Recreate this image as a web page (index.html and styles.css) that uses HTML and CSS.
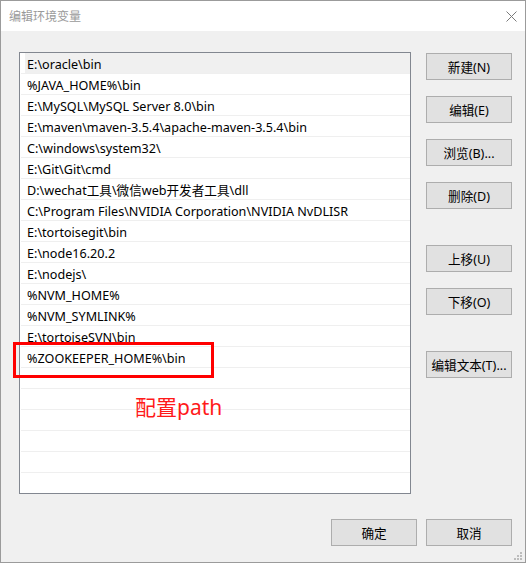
FILE: index.html
```html
<!DOCTYPE html>
<html lang="zh-CN">
<head>
<meta charset="utf-8">
<title>编辑环境变量</title>
<link rel="stylesheet" href="styles.css">
</head>
<body>
<div class="window">
  <div class="titlebar">
    <span class="title">编辑环境变量</span>
    <svg class="close" width="11" height="11" viewBox="0 0 11 11"><path d="M0.5 0.5 L10.5 10.5 M10.5 0.5 L0.5 10.5" stroke="#7a7a7a" stroke-width="1" fill="none"/></svg>
  </div>
  <div class="content">
    <div class="main">
      <div class="list">
        <div class="row selected">E:\oracle\bin</div>
        <div class="row">%JAVA_HOME%\bin</div>
        <div class="row">E:\MySQL\MySQL Server 8.0\bin</div>
        <div class="row">E:\maven\maven-3.5.4\apache-maven-3.5.4\bin</div>
        <div class="row">C:\windows\system32\</div>
        <div class="row">E:\Git\Git\cmd</div>
        <div class="row">D:\wechat工具\微信web开发者工具\dll</div>
        <div class="row">C:\Program Files\NVIDIA Corporation\NVIDIA NvDLISR</div>
        <div class="row">E:\tortoisegit\bin</div>
        <div class="row">E:\node16.20.2</div>
        <div class="row">E:\nodejs\</div>
        <div class="row">%NVM_HOME%</div>
        <div class="row">%NVM_SYMLINK%</div>
        <div class="row">E:\tortoiseSVN\bin</div>
        <div class="row">%ZOOKEEPER_HOME%\bin</div>
        <div class="row"></div>
        <div class="row"></div>
        <div class="row"></div>
        <div class="row"></div>
        <div class="row"></div>
        <div class="row"></div>
      </div>
      <div class="side">
        <button class="btn">新建(N)</button>
        <button class="btn gap-s">编辑(E)</button>
        <button class="btn gap-s">浏览(B)...</button>
        <button class="btn gap-s">删除(D)</button>
        <button class="btn gap-l">上移(U)</button>
        <button class="btn gap-s">下移(O)</button>
        <button class="btn gap-l">编辑文本(T)...</button>
      </div>
    </div>
    <div class="footer">
      <button class="btn">确定</button>
      <button class="btn">取消</button>
    </div>
    <svg class="grip" width="9" height="9" viewBox="0 0 9 9">
      <rect x="6" y="0" width="2" height="2" fill="#bcbcbc"/>
      <rect x="3" y="3" width="2" height="2" fill="#bcbcbc"/>
      <rect x="6" y="3" width="2" height="2" fill="#bcbcbc"/>
      <rect x="0" y="6" width="2" height="2" fill="#bcbcbc"/>
      <rect x="3" y="6" width="2" height="2" fill="#bcbcbc"/>
      <rect x="6" y="6" width="2" height="2" fill="#bcbcbc"/>
    </svg>
  </div>
  <div class="mark-box"></div>
  <div class="mark-text">配置path</div>
</div>
</body>
</html>
```
FILE: styles.css
```css
* {
  box-sizing: border-box;
}

body {
  margin: 0;
  background: #ffffff;
  font-family: "Noto Sans", "Noto Sans CJK SC", sans-serif;
  font-size: 12.6px;
  color: #000;
}

.window {
  position: relative;
  width: 526px;
  height: 563px;
  border: 1px solid #9b9b9b;
  background: #f0f0f0;
  display: flex;
  flex-direction: column;
}

.titlebar {
  height: 30px;
  background: #ffffff;
  display: flex;
  align-items: center;
  justify-content: space-between;
  padding: 0 8px 0 8px;
}

.title {
  color: #9a9a9a;
  font-family: "Noto Sans CJK SC", sans-serif;
  font-size: 12px;
  line-height: 1;
}

.close {
  display: block;
}

.content {
  position: relative;
  flex: 1;
  padding: 21px 13px 0 18px;
}

.main {
  display: flex;
  gap: 15px;
}

.list {
  width: 392px;
  height: 442px;
  border: 1px solid #828790;
  background: #ffffff;
  padding-left: 1px;
  overflow: hidden;
}

.row {
  height: 21px;
  padding-top: 2px;
  line-height: 19px;
  border-bottom: 1px solid #efefef;
  padding-left: 6px;
  white-space: nowrap;
  overflow: visible;
}

.row.selected {
  background: linear-gradient(to right, transparent 4px, #f0f0f0 4px);
}

.side {
  display: flex;
  flex-direction: column;
  padding-top: 1px;
}

.btn {
  width: 86px;
  height: 27px;
  border: 1px solid #adadad;
  background: #e1e1e1;
  font-family: "Noto Sans", "Noto Sans CJK SC", sans-serif;
  font-size: 12.6px;
  color: #000;
  padding: 0;
  margin: 0;
}

.gap-s {
  margin-top: 16px;
}

.gap-l {
  margin-top: 36px;
}

.footer {
  display: flex;
  justify-content: flex-end;
  gap: 9px;
  margin-top: 25px;
}

.grip {
  position: absolute;
  right: 2px;
  bottom: 1px;
}

.mark-box {
  position: absolute;
  left: 12px;
  top: 341px;
  width: 201px;
  height: 36px;
  border: 3px solid #ff0000;
}

.mark-text {
  position: absolute;
  left: 134px;
  top: 393px;
  color: #ff1a1a;
  font-family: "Noto Sans", "Noto Sans CJK SC", sans-serif;
  font-size: 21px;
  line-height: 26px;
}
```
